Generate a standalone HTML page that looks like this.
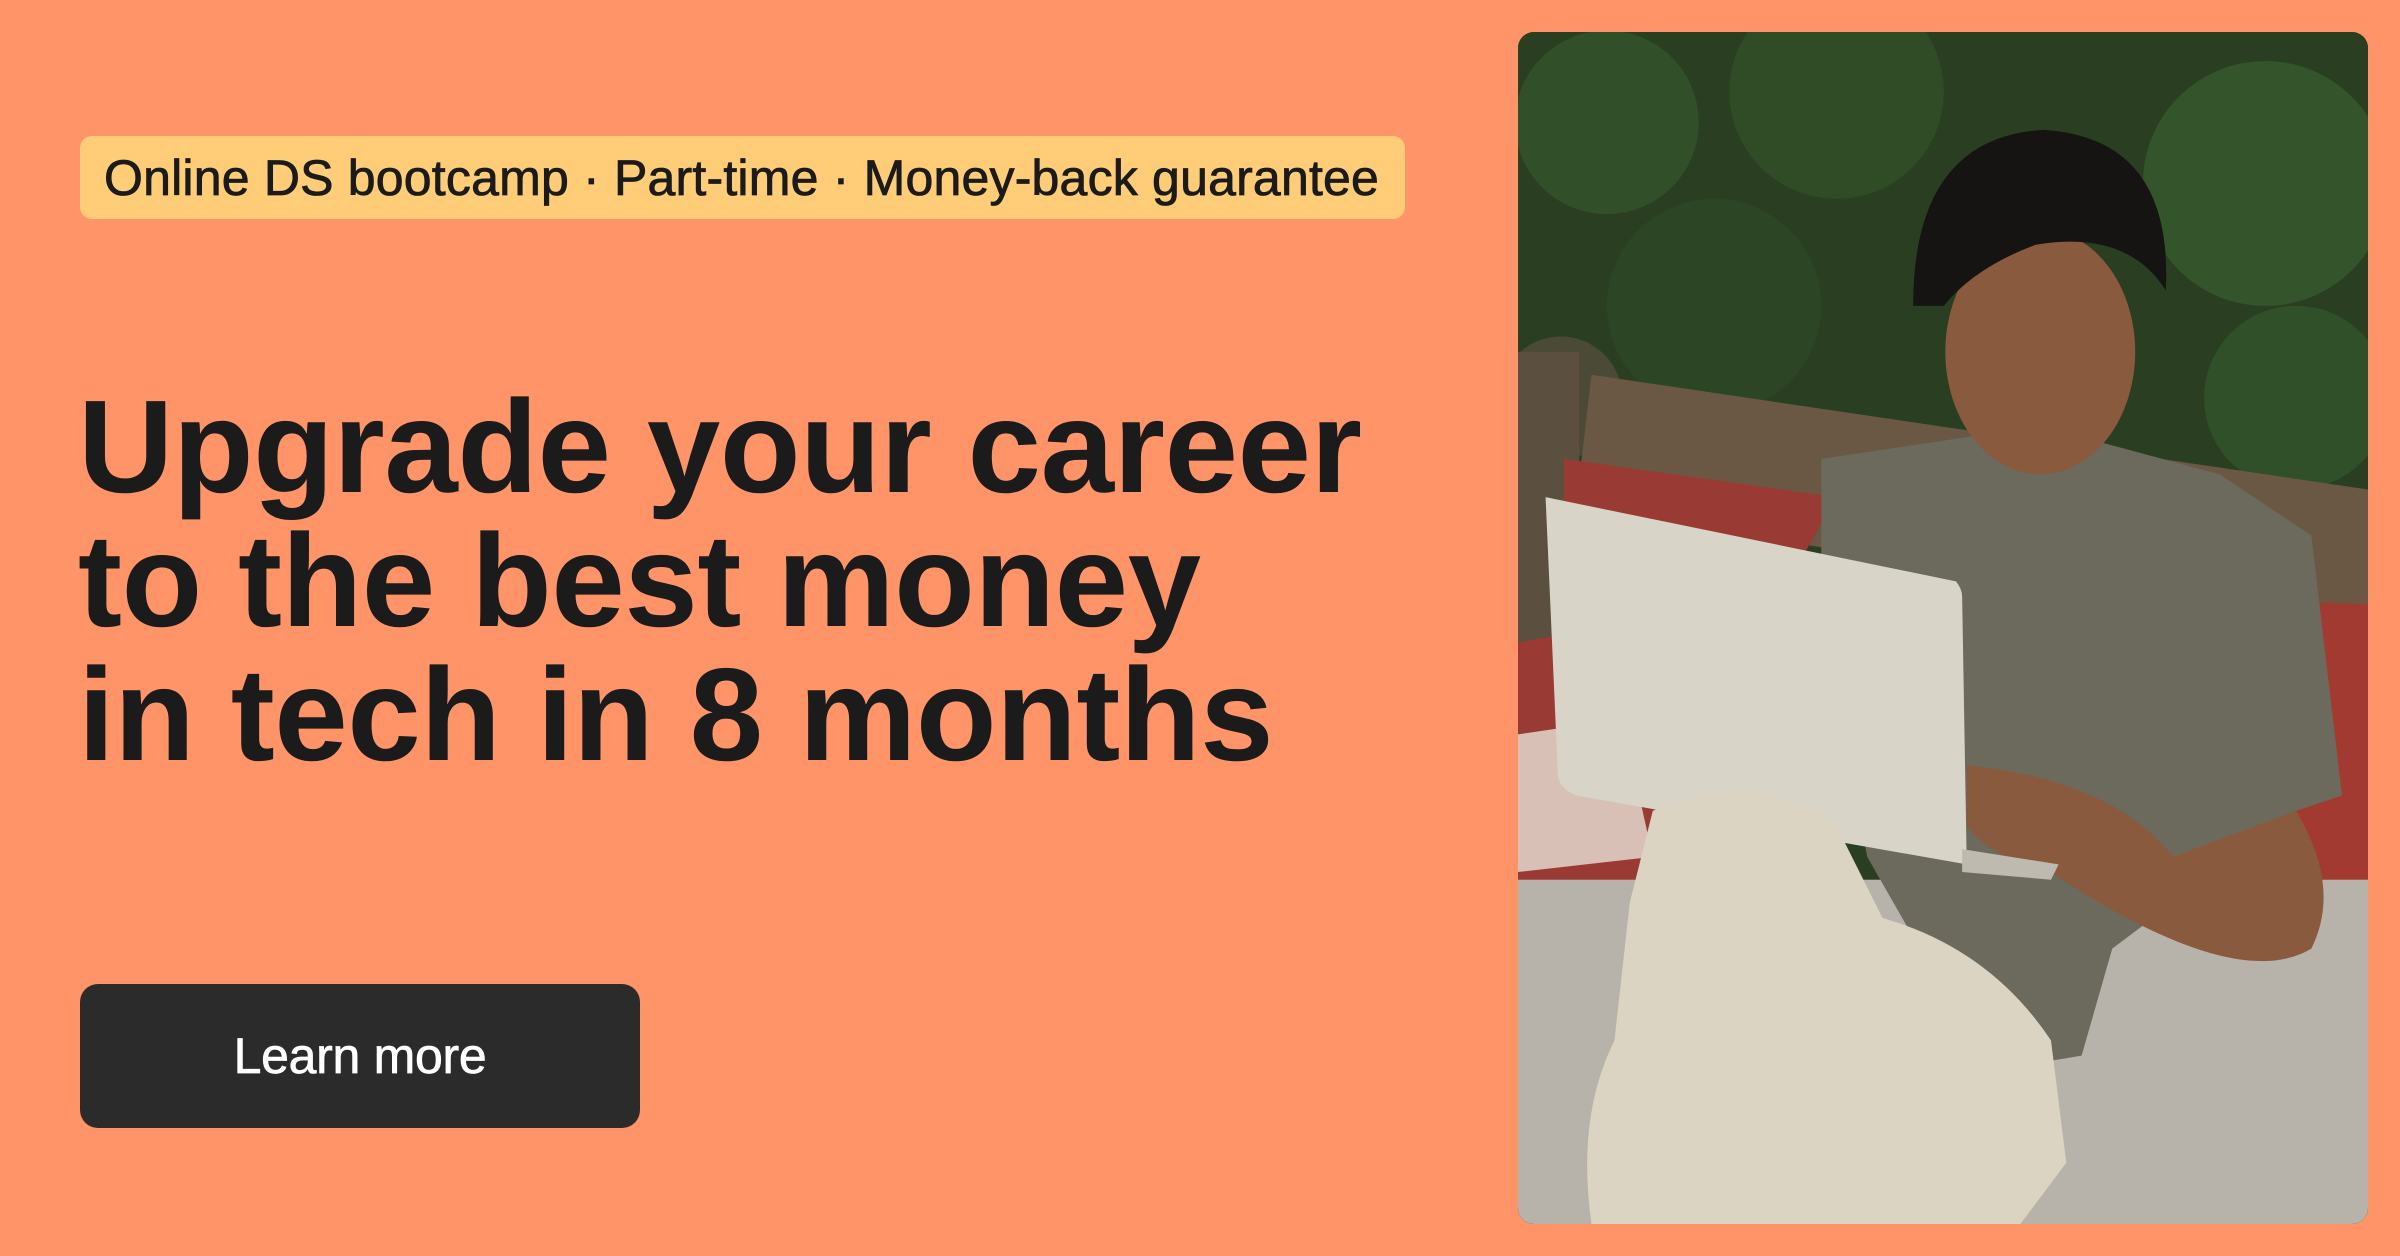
<!DOCTYPE html>
<html><head><meta charset="utf-8"><style>
html,body{margin:0;padding:0;width:2400px;height:1256px;overflow:hidden;background:#FF9468;}
.wrap{position:relative;width:2400px;height:1256px;background:#FF9468;border-radius:24px;overflow:hidden;font-family:"Liberation Sans",Arial,sans-serif;}
.tag{position:absolute;left:80px;top:136px;width:1325px;height:83px;background:#FFCD78;border-radius:12px;}
.tag span{position:absolute;left:24px;top:14px;font-size:50px;line-height:56px;color:#1b1b1b;letter-spacing:0.2px;white-space:nowrap;-webkit-text-stroke:0.8px #1b1b1b;}
.h{position:absolute;left:78px;top:380px;font-size:132px;line-height:134px;font-weight:bold;color:#1b1b1b;letter-spacing:-0.4px;white-space:nowrap;}
.btn{position:absolute;left:80px;top:984px;width:560px;height:144px;background:#2b2b2b;border-radius:18px;color:#fff;font-size:50px;line-height:144px;text-align:center;letter-spacing:-0.3px;-webkit-text-stroke:0.7px #fff;}
.img{position:absolute;left:1518px;top:32px;width:850px;height:1192px;border-radius:16px;overflow:hidden;background:#2d4426;}
.img svg{width:100%;height:100%;display:block;}
</style></head><body><div class="wrap">
<div class="tag"><span>Online DS bootcamp · Part-time · Money-back guarantee</span></div>
<div class="h">Upgrade your career<br>to the best money<br>in tech in 8 months</div>
<div class="btn">Learn more</div>
<div class="img"><svg viewBox="992 21 555 779" preserveAspectRatio="none">
<rect x="992" y="21" width="555" height="779" fill="#2a3f22"/>
<circle cx="1050" cy="80" r="60" fill="#31502a"/><circle cx="1200" cy="60" r="70" fill="#2f4c27"/>
<circle cx="1480" cy="120" r="80" fill="#34552b"/><circle cx="1120" cy="200" r="70" fill="#2c4524"/>
<circle cx="1500" cy="260" r="60" fill="#30502a"/><circle cx="1020" cy="260" r="40" fill="#4a4a36"/>
<rect x="992" y="230" width="40" height="330" fill="#5b5040"/>
<polygon points="1040,245 1547,320 1547,420 1030,330" fill="#6b5844"/>
<polygon points="1022,300 1200,325 1180,360 1022,340" fill="#9a3a34"/>
<polygon points="992,420 1100,400 1100,600 992,600" fill="#9a3a34"/>
<polygon points="992,480 1060,470 1080,560 992,570" fill="#e8e2d8" opacity=".8"/>
<polygon points="1390,390 1547,395 1547,780 1370,680" fill="#a33a32"/>
<polygon points="1420,620 1547,600 1547,760 1460,720" fill="#e8e4dc" opacity=".8"/>
<rect x="992" y="575" width="555" height="225" fill="#b8b3aa"/>
<polygon points="1190,300 1290,285 1320,275 1450,310 1510,350 1530,520 1500,530 1380,620 1360,690 1300,700 1220,560 1190,400" fill="#6b6a5c"/>
<path d="M1285,500 Q1380,510 1420,560 L1500,530 Q1530,580 1510,620 Q1460,650 1340,570 Q1300,560 1285,540 Z" fill="#8a5a3e"/>
<ellipse cx="1333" cy="230" rx="62" ry="80" fill="#8a5a3e"/>
<path d="M1250,200 Q1250,90 1335,85 Q1420,90 1415,190 Q1390,150 1330,160 Q1290,175 1270,200 Z" fill="#151412"/>
<path d="M1010,325 L1278,380 Q1282,385 1282,390 L1285,565 L1030,520 Q1018,515 1018,505 Z" fill="#d9d4c8"/>
<polygon points="1282,555 1345,565 1340,575 1282,570" fill="#bfbab0"/>
<path d="M1080,530 Q1150,500 1200,540 L1230,600 Q1300,620 1340,680 L1350,760 L1320,800 L1040,800 Q1030,730 1055,680 L1065,590 Z" fill="#dcd4c2"/>
</svg></div>
</div></body></html>
